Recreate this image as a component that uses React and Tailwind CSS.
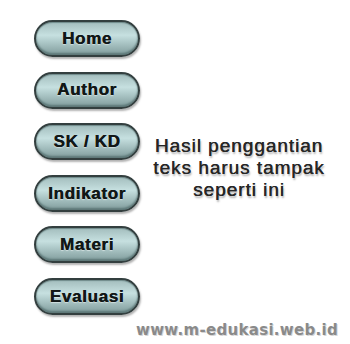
const menuItems = ["Home", "Author", "SK / KD", "Indikator", "Materi", "Evaluasi"];

const MenuButton = ({ label }) => {
  return (
    <div className="h-[37px] w-[106px] rounded-full border-2 border-[#333f3f] bg-gradient-to-b from-[#a3bdbd] via-[#c6e0e0] via-40% to-[#809c9c] shadow-[inset_0_1px_1px_#6f8a8a,inset_0_-2px_2px_#5d7878,1px_2px_2px_rgba(0,0,0,0.3)] flex items-center justify-center">
      <span className="font-['Liberation_Sans',Arial,sans-serif] text-[17px] font-bold tracking-[0.04em] text-[#111717] [text-shadow:0.4px_0_0_#111717,0_1px_1px_rgba(255,255,255,0.5)] whitespace-pre">
        {label}
      </span>
    </div>
  );
};

export default function App() {
  return (
    <div className="w-[350px] h-[344px] bg-white flex flex-col overflow-hidden">
      <div className="flex items-start">
        {/* Menu buttons */}
        <div className="ml-[34px] mt-[20px] flex flex-col gap-[14.6px]">
          {menuItems.map((item) => (
            <MenuButton key={item} label={item} />
          ))}
        </div>

        {/* Caption */}
        <div className="ml-[9px] mt-[135px] w-[180px] text-center font-['Liberation_Sans',Arial,sans-serif] text-[19px] leading-[22px] tracking-[0.05em] text-[#262626] [text-shadow:0.3px_0_0_#262626,1px_2px_2px_rgba(0,0,0,0.35)]">
          <p>Hasil penggantian</p>
          <p>teks harus tampak</p>
          <p>seperti ini</p>
        </div>
      </div>

      <div className="mt-[6px] pr-[12px] flex justify-end">
        <span className="font-['DejaVu_Sans',Verdana,sans-serif] text-[15px] leading-[18px] font-bold tracking-[0.02em] text-[#8a8a8a] [text-shadow:1px_1px_0_#d6d6d6]">
          www.m-edukasi.web.id
        </span>
      </div>
    </div>
  );
}
